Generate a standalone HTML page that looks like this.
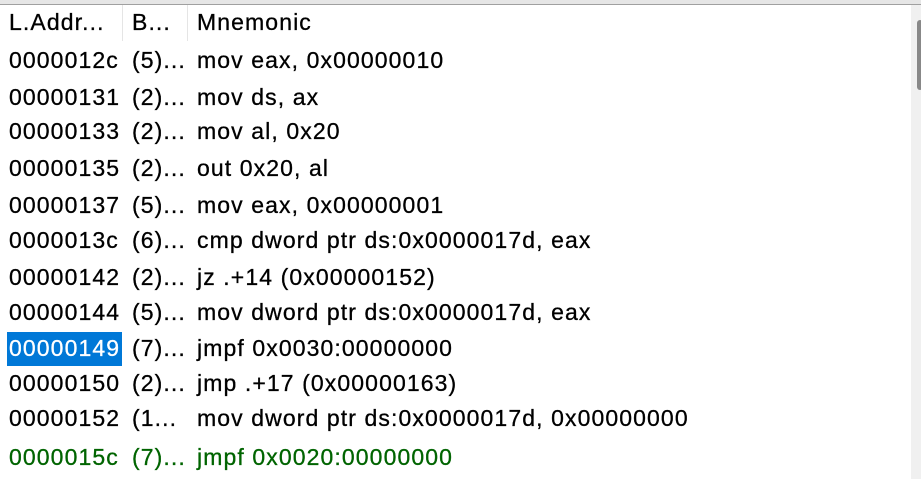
<!DOCTYPE html><html><head><style>
body{margin:0;width:921px;height:479px;overflow:hidden;background:#fff;font-family:"Liberation Sans",sans-serif;font-size:23px;letter-spacing:1.1px;color:#000;position:relative;-webkit-text-stroke:0.3px}
.top{position:absolute;left:0;top:0;width:921px;height:4px;background:#e6e6e6;border-bottom:1px solid #a0a0a0}
.sep{position:absolute;top:5px;width:1px;height:36px;background:#e5e5e5}
.r{position:absolute;left:0;height:36px;line-height:36px;white-space:nowrap}
.r span{position:absolute}
.a{left:9px}.b{left:132px}.m{left:197px}
.sb{position:absolute;left:911px;top:5px;width:10px;height:474px;background:#f0f0f0}
.th{position:absolute;left:917px;top:20px;width:6px;height:70px;background:#888;border-radius:3px}
.sel{position:absolute;left:7px;top:332px;width:115px;height:34px;background:#0078d7}
.g{color:#006400}
</style></head><body>
<div class="top"></div>
<div class="sep" style="left:122px"></div><div class="sep" style="left:187px"></div>
<div class="r" style="top:4px"><span class="a">L.Addr...</span><span class="b">B...</span><span class="m">Mnemonic</span></div>
<div class="sel"></div>
<div class="r" style="top:42px"><span class="a">0000012c</span><span class="b">(5)...</span><span class="m">mov eax, 0x00000010</span></div>
<div class="r" style="top:79px"><span class="a">00000131</span><span class="b">(2)...</span><span class="m">mov ds, ax</span></div>
<div class="r" style="top:113px"><span class="a">00000133</span><span class="b">(2)...</span><span class="m">mov al, 0x20</span></div>
<div class="r" style="top:150px"><span class="a">00000135</span><span class="b">(2)...</span><span class="m">out 0x20, al</span></div>
<div class="r" style="top:187px"><span class="a">00000137</span><span class="b">(5)...</span><span class="m">mov eax, 0x00000001</span></div>
<div class="r" style="top:222px"><span class="a">0000013c</span><span class="b">(6)...</span><span class="m">cmp dword ptr ds:0x0000017d, eax</span></div>
<div class="r" style="top:259px"><span class="a">00000142</span><span class="b">(2)...</span><span class="m">jz .+14 (0x00000152)</span></div>
<div class="r" style="top:294px"><span class="a">00000144</span><span class="b">(5)...</span><span class="m">mov dword ptr ds:0x0000017d, eax</span></div>
<div class="r" style="top:330px"><span class="a" style="color:#fff">00000149</span><span class="b">(7)...</span><span class="m">jmpf 0x0030:00000000</span></div>
<div class="r" style="top:365px"><span class="a">00000150</span><span class="b">(2)...</span><span class="m">jmp .+17 (0x00000163)</span></div>
<div class="r" style="top:400px"><span class="a">00000152</span><span class="b">(1...</span><span class="m">mov dword ptr ds:0x0000017d, 0x00000000</span></div>
<div class="r g" style="top:439px"><span class="a">0000015c</span><span class="b">(7)...</span><span class="m">jmpf 0x0020:00000000</span></div>
<div class="sb"></div><div class="th"></div>
</body></html>
